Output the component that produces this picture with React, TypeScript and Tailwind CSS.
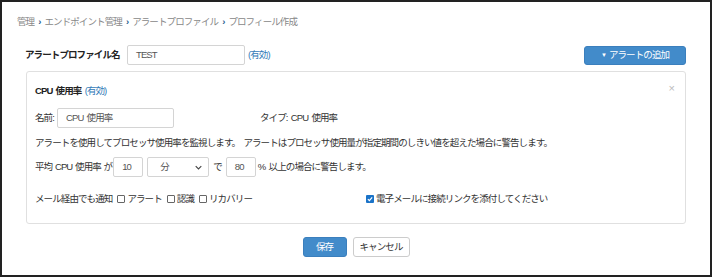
import React from 'react';

// ─── helpers ────────────────────────────────────────────────────────────────
const font = { fontFamily: '"Liberation Sans", "Noto Sans CJK JP", sans-serif' };

function Crumb({ children, last }: { children: React.ReactNode; last?: boolean }) {
  return (
    <>
      <span>{children}</span>
      {!last && <span className="mx-[4px] text-[#2a5d8f] font-bold">›</span>}
    </>
  );
}

function Box({ w, children, className = '' }: { w: string; children?: React.ReactNode; className?: string }) {
  return (
    <div
      className={`${w} h-[20px] shrink-0 flex items-center border border-[#d4d4d4] rounded-[2px] bg-white px-[8px] text-[#555] ${className}`}
    >
      {children}
    </div>
  );
}

function Check({ checked, label }: { checked?: boolean; label: string }) {
  return (
    <span className="inline-flex items-center ml-[5px]">
      {checked ? (
        <span className="w-[8px] h-[8px] rounded-[1px] bg-[#1a73c8] flex items-center justify-center mr-[2px]">
          <svg width="6" height="6" viewBox="0 0 10 10">
            <path d="M1.5 5.2 L4 7.7 L8.6 2.3" stroke="white" strokeWidth="2" fill="none" />
          </svg>
        </span>
      ) : (
        <span className="w-[8px] h-[8px] rounded-[1px] border border-[#666] bg-white mr-[2px]" />
      )}
      {label}
    </span>
  );
}

// ─── Main export ─────────────────────────────────────────────────────────────
export default function App() {
  return (
    <div
      style={font}
      className="w-[712px] h-[277px] border-2 border-[#222] bg-white text-[9.5px] tracking-[-0.9px] [word-spacing:1.5px] whitespace-nowrap text-[#333] leading-[14px]"
    >
      {/* breadcrumb */}
      <div className="pt-[13px] pl-[15px] text-[#888] flex items-center">
        <Crumb>管理</Crumb>
        <Crumb>エンドポイント管理</Crumb>
        <Crumb>アラートプロファイル</Crumb>
        <Crumb last>プロフィール作成</Crumb>
      </div>

      <div className="px-[24px] mt-[16px]">
        {/* profile name row */}
        <div className="flex items-center h-[20px]">
          <div className="w-[102px] font-bold text-[#222] -ml-[1px]">アラートプロファイル名</div>
          <Box w="w-[118px]">TEST</Box>
          <a className="ml-[3px] text-[#337ab7]">(有効)</a>
          <button className="ml-auto w-[102px] h-[19px] rounded-[3px] bg-[#428bca] border border-[#3b7fbd] text-white flex items-center justify-center">
            <span className="text-[6px] mr-[3px]">▼</span>アラートの追加
          </button>
        </div>

        {/* alert panel */}
        <div className="mt-[6px] h-[153px] border border-[#e0e0e0] rounded-[3px] pl-[8px] pr-[11px] pt-[12px]">
          <div className="flex items-center justify-between">
            <div className="font-bold text-[#222]">
              CPU 使用率 <span className="font-normal text-[#337ab7]">(有効)</span>
            </div>
            <span className="text-[#bbb] text-[11px] -mt-[6px]">×</span>
          </div>

          <div className="flex items-center mt-[10px]">
            <span className="w-[22px]">名前:</span>
            <Box w="w-[117px]">CPU 使用率</Box>
            <span className="ml-[86px]">タイプ: CPU 使用率</span>
          </div>

          <div className="mt-[8px]">
            アラートを使用してプロセッサ使用率を監視します。 アラートはプロセッサ使用量が指定期間のしきい値を超えた場合に警告します。
          </div>

          <div className="flex items-center mt-[7px]">
            <span className="mr-[1px] shrink-0 [word-spacing:1px]">平均 CPU 使用率 が</span>
            <Box w="w-[30px]">10</Box>
            <Box w="w-[62px]" className="ml-[4px] justify-between pl-[12px] pr-[6px]">
              <span>分</span>
              <svg width="7" height="5" viewBox="0 0 10 6">
                <path d="M1 1 L5 5 L9 1" stroke="#444" strokeWidth="1.6" fill="none" />
              </svg>
            </Box>
            <span className="mx-[4px]">で</span>
            <Box w="w-[30px]">80</Box>
            <span className="ml-[2px]">% 以上の場合に警告します。</span>
          </div>

          <div className="flex items-center mt-[15px]">
            <span className="w-[326px] shrink-0 flex items-center">
              メール経由でも通知
              <Check label="アラート" />
              <Check label="認識" />
              <Check label="リカバリー" />
            </span>
            <Check checked label="電子メールに接続リンクを添付してください" />
          </div>
        </div>

        {/* footer buttons */}
        <div className="flex justify-center gap-[6px] mt-[13px]">
          <button className="w-[44px] h-[20px] rounded-[3px] bg-[#428bca] border border-[#3b7fbd] text-white">保存</button>
          <button className="w-[57px] h-[20px] rounded-[3px] bg-white border border-[#ccc] text-[#333]">キャンセル</button>
        </div>
      </div>
    </div>
  );
}
